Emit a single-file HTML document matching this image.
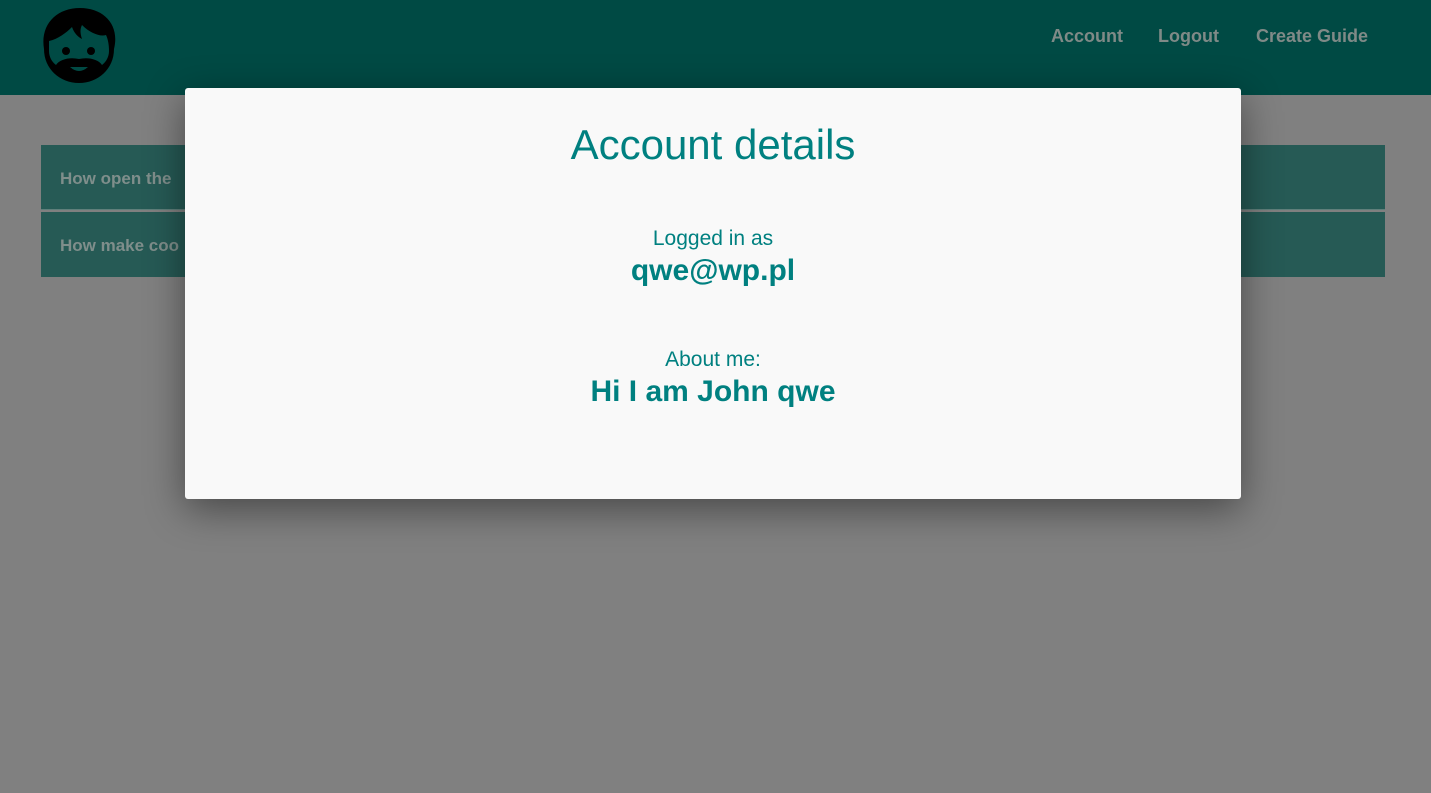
<!DOCTYPE html>
<html><head><meta charset="utf-8"><style>
html,body{margin:0;padding:0;width:1431px;height:793px;overflow:hidden;background:#808080;font-family:"Liberation Sans","DejaVu Sans",sans-serif}
.hdr{position:absolute;left:0;top:0;width:1431px;height:95px;background:#004a44}
.nav{position:absolute;top:26px;font-size:18px;font-weight:bold;color:#7f8a87}
.item{position:absolute;left:41px;width:1344px;height:65px;background:#265a55;color:#7f8e8b;font-size:17px;font-weight:bold;box-sizing:border-box;padding-left:19px;line-height:68px}
.modal{position:absolute;left:185px;top:88px;width:1056px;height:411px;background:#f9f9f9;border-radius:3px;box-shadow:0 10px 40px rgba(0,0,0,.45);color:#008080;text-align:center}
</style></head><body>
<div class="hdr">
<svg style="position:absolute;left:40px;top:7px" width="78" height="78" viewBox="0 0 78 78">
<path d="M4 42 C0 18 16 1 40 1 C64 1 80 18 74 42 C74 62 58 76 39 76 C20 76 4 62 4 42Z" fill="#000"/>
<path d="M9 34 C18 32 26 26 32 20 C34 26 38 30 42 32 C40 26 40 22 42 18 C50 26 60 30 66 28 C68 32 69 38 69 44 C69 50 66 55 62 58 C58 52 48 50 39 52 C30 50 20 52 16 58 C12 55 9 50 9 44Z" fill="#004a44"/>
<circle cx="26" cy="44" r="4" fill="#000"/><circle cx="51" cy="44" r="4" fill="#000"/>
<path d="M30 60 Q39 68 48 60 Z" fill="#004a44"/>
</svg>
<div class="nav" style="left:1051px">Account</div>
<div class="nav" style="left:1158px">Logout</div>
<div class="nav" style="left:1256px">Create Guide</div>
</div>
<div class="item" style="top:145px;border-bottom:1px solid #5f7f7b">How open the</div>
<div class="item" style="top:212px">How make coo</div>
<div class="modal">
<div style="position:absolute;top:33px;width:100%;font-size:42px">Account details</div>
<div style="position:absolute;top:139px;width:100%;font-size:21px">Logged in as</div>
<div style="position:absolute;top:166px;width:100%;font-size:30px;font-weight:bold">qwe@wp.pl</div>
<div style="position:absolute;top:260px;width:100%;font-size:21px">About me:</div>
<div style="position:absolute;top:287px;width:100%;font-size:30px;font-weight:bold">Hi I am John qwe</div>
</div>
</body></html>
